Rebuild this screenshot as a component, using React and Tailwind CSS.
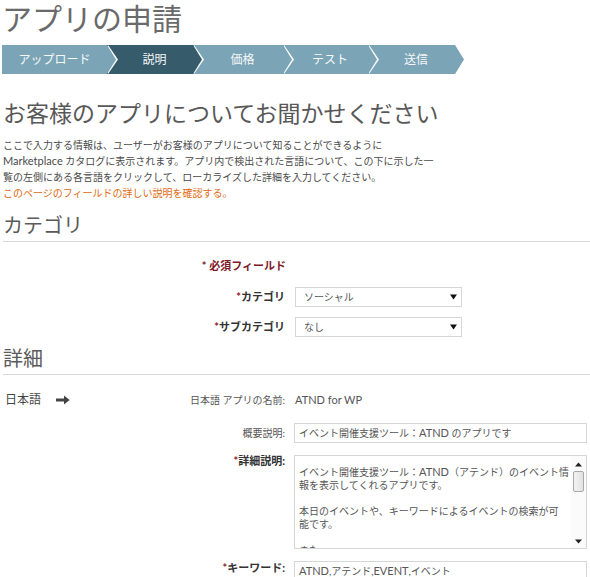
import React from "react";

const steps = [
  { label: "アップロード", cls: "w-[105px] bg-[#7ba4b6]", tip: "bg-[#7ba4b6]" },
  { label: "説明", cls: "w-[86px] bg-[#365b6b] pl-[9px]", tip: "bg-[#365b6b]" },
  { label: "価格", cls: "w-[90px] bg-[#7ba4b6] pl-[9px]", tip: "bg-[#7ba4b6]" },
  { label: "テスト", cls: "w-[85px] bg-[#7ba4b6] pl-[9px]", tip: "bg-[#7ba4b6]" },
  { label: "送信", cls: "w-[87px] bg-[#7ba4b6] pl-[9px]", tip: "bg-[#7ba4b6]" },
];

function Steps() {
  return (
    <div className="ml-[2px] mt-[9px] flex h-[29px]">
      {steps.map((s) => (
        <div
          key={s.label}
          className={`relative flex h-full items-center justify-center text-[12px] text-[#f5f8f9] ${s.cls}`}
        >
          {s.label}
          <span className="absolute right-[-11px] top-0 z-10 h-full w-[10px] bg-white [clip-path:polygon(0_0,100%_50%,0_100%)]" />
          <span className={`absolute right-[-9px] top-0 z-20 h-full w-[9px] [clip-path:polygon(0_0,100%_50%,0_100%)] ${s.tip}`} />
        </div>
      ))}
    </div>
  );
}

function Star() {
  return <span className="text-[#8c1d2f]">*</span>;
}

function Caret() {
  return (
    <svg width="7" height="6" viewBox="0 0 7 6" className="shrink-0">
      <path d="M0 0.5 H7 L3.5 5.5 Z" fill="#111" />
    </svg>
  );
}

function Select({ value }) {
  return (
    <div className="flex h-[20px] w-[167px] items-center justify-between border border-[#d6d6d6] bg-white pl-[8px] pr-[4px] text-[10px] text-[#555]">
      <span>{value}</span>
      <Caret />
    </div>
  );
}

function SectionHead({ children, className }) {
  return (
    <div className={`border-b border-[#d9d9d9] pb-[3px] text-[20px] leading-[26px] text-[#5a5a5a] ${className}`}>
      {children}
    </div>
  );
}

function ScrollBar() {
  return (
    <div className="flex w-[15px] shrink-0 flex-col items-center bg-[#fbfbfb] pt-[6px] pb-[4px]">
      <svg width="7" height="5" viewBox="0 0 7 5">
        <path d="M0 4.5 H7 L3.5 0.5 Z" fill="#222" />
      </svg>
      <div className="mt-[4px] h-[21px] w-[11px] rounded-[2px] border border-[#a9a9a9] bg-gradient-to-r from-[#f2f2f2] to-[#e2e2e2]" />
      <div className="flex-1" />
      <svg width="7" height="5" viewBox="0 0 7 5">
        <path d="M0 0.5 H7 L3.5 4.5 Z" fill="#222" />
      </svg>
    </div>
  );
}

export default function App() {
  return (
    <div className="h-[577px] w-[590px] overflow-hidden bg-white font-['Lato','Noto_Sans_CJK_JP',sans-serif] text-[#444]">
      <h1 className="pl-[2px] text-[30px] leading-[36px] text-[#6a6a6a]">アプリの申請</h1>

      <Steps />

      <h2 className="mt-[24px] pl-[3px] text-[23px] leading-[30px] text-[#585858]">
        お客様のアプリについてお聞かせください
      </h2>

      <div className="mt-[9px] whitespace-nowrap pl-[3px] text-[10px] leading-[16px] text-[#4a4a4a]">
        <p>
          ここで入力する情報は、ユーザーがお客様のアプリについて知ることができるように
          <br />
          <span className="text-[11px]">Marketplace</span> カタログに表示されます。アプリ内で検出された言語について、この下に示した一
          <br />
          覧の左側にある各言語をクリックして、ローカライズした詳細を入力してください。
        </p>
        <p className="text-[#e06b10]">このページのフィールドの詳しい説明を確認する。</p>
      </div>

      <div className="pl-[3px]">
        <SectionHead className="mt-[11px]">カテゴリ</SectionHead>

        <div className="mt-[16px] flex h-[16px] items-center">
          <div className="w-[283px] text-right text-[11px] font-bold text-[#7d1a2a]">* 必須フィールド</div>
        </div>

        <div className="mt-[13px] flex items-center">
          <div className="w-[282px] text-right text-[11px] font-bold text-[#333]">
            <Star />カテゴリ
          </div>
          <div className="ml-[10px]">
            <Select value="ソーシャル" />
          </div>
        </div>

        <div className="mt-[10px] flex items-center">
          <div className="w-[282px] text-right text-[11px] font-bold text-[#333]">
            <Star />サブカテゴリ
          </div>
          <div className="ml-[10px]">
            <Select value="なし" />
          </div>
        </div>

        <SectionHead className="mt-[8px]">詳細</SectionHead>

        <div className="mt-[17px] flex h-[16px] items-center">
          <div className="flex w-[282px] items-center">
            <span className="ml-[2px] text-[12px] text-[#444]">日本語</span>
            <svg width="14" height="10" viewBox="0 0 14 10" className="ml-[15px]">
              <path d="M0 3.6 H8 V0.4 L13.6 5 L8 9.6 V6.4 H0 Z" fill="#444" />
            </svg>
            <span className="ml-auto text-[10px] text-[#555]">日本語 アプリの名前:</span>
          </div>
          <span className="ml-[10px] text-[11px] text-[#555]">ATND for WP</span>
        </div>

        <div className="mt-[15px] flex items-center">
          <div className="w-[282px] text-right text-[10px] text-[#555]">概要説明:</div>
          <div className="ml-[9px] flex h-[20px] w-[293px] items-center border border-[#d6d6d6] pl-[4px] text-[10px] text-[#555]">
            イベント開催支援ツール：<span className="text-[11px]">ATND</span>&nbsp;のアプリです
          </div>
        </div>

        <div className="mt-[12px] flex items-start">
          <div className="w-[282px] text-right text-[11px] font-bold leading-[12px] text-[#333]">
            <Star />詳細説明:
          </div>
          <div className="ml-[9px] flex h-[94px] w-[293px] overflow-hidden border border-[#d6d6d6]">
            <div className="flex-1 overflow-hidden whitespace-nowrap pl-[4px] pt-[9px] text-[10px] leading-[13px] text-[#555]">
              <div>
                イベント開催支援ツール：<span className="text-[11px]">ATND</span>（アテンド）のイベント情
              </div>
              <div>報を表示してくれるアプリです。</div>
              <div>&nbsp;</div>
              <div>本日のイベントや、キーワードによるイベントの検索が可</div>
              <div>能です。</div>
              <div>&nbsp;</div>
              <div>また、</div>
            </div>
            <ScrollBar />
          </div>
        </div>

        <div className="mt-[12px] flex items-start">
          <div className="w-[282px] pt-[1px] text-right text-[11px] font-bold leading-[12px] text-[#333]">
            <Star />キーワード:
          </div>
          <div className="ml-[9px] flex h-[20px] w-[293px] items-center border border-[#d6d6d6] pl-[4px] text-[10px] text-[#555]">
            <span className="text-[11px]">ATND</span>,アテンド,<span className="text-[11px]">EVENT</span>,イベント
          </div>
        </div>
      </div>
    </div>
  );
}
